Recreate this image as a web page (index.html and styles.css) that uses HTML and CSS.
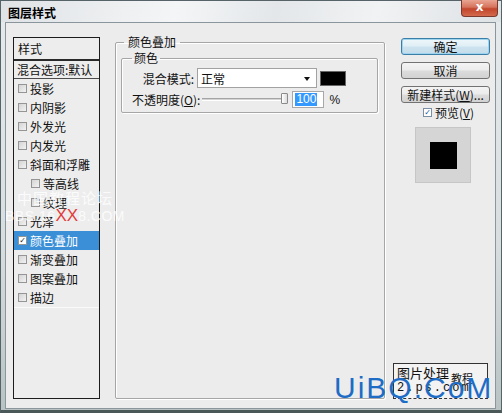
FILE: index.html
```html
<!DOCTYPE html>
<html lang="zh-CN">
<head>
    <meta charset="UTF-8">
    <title>图层样式</title>
    <link rel="stylesheet" href="styles.css">
</head>
<body>
    <div class="window">
        <!-- 标题栏 -->
        <div class="titlebar">
            <span class="title">图层样式</span>
            <span class="close">x</span>
        </div>

        <div class="client">
            <!-- 左侧样式列表 -->
            <div class="list">
                <div class="list-head">样式</div>
                <div class="list-blend">混合选项:默认</div>
                <div class="item"><i class="cb"></i>投影</div>
                <div class="item"><i class="cb"></i>内阴影</div>
                <div class="item"><i class="cb"></i>外发光</div>
                <div class="item"><i class="cb"></i>内发光</div>
                <div class="item"><i class="cb"></i>斜面和浮雕</div>
                <div class="item sub"><i class="cb"></i>等高线</div>
                <div class="item sub"><i class="cb"></i>纹理</div>
                <div class="item"><i class="cb"></i>光泽</div>
                <div class="item active"><i class="cb checked">✓</i>颜色叠加</div>
                <div class="item"><i class="cb"></i>渐变叠加</div>
                <div class="item"><i class="cb"></i>图案叠加</div>
                <div class="item"><i class="cb"></i>描边</div>
                <div class="list-rest"></div>
            </div>

            <!-- 中间设置区 -->
            <fieldset class="group">
                <legend>颜色叠加</legend>
                <fieldset class="group inner">
                    <legend>颜色</legend>
                    <div class="row">
                        <span class="label">混合模式:</span>
                        <div class="select">正常<span class="arrow"></span></div>
                        <span class="swatch"></span>
                    </div>
                    <div class="row row-opacity">
                        <span class="label-op">不透明度(<u>O</u>):</span>
                        <div class="slider"><span class="track"></span><span class="thumb"></span></div>
                        <div class="input"><span class="sel">100</span></div>
                        <span class="pct">%</span>
                    </div>
                </fieldset>
            </fieldset>

            <!-- 右侧按钮 -->
            <div class="side">
                <div class="btn focus">确定</div>
                <div class="btn">取消</div>
                <div class="btn">新建样式(<u>W</u>)...</div>
                <div class="preview-check"><i class="cb checked blue">✓</i>预览(<u>V</u>)</div>
                <div class="preview"><span class="preview-fill"></span></div>
            </div>
        </div>

        <!-- 水印 -->
        <div class="wm-site">
            <div class="wm-line1">中国教程论坛</div>
            <div class="wm-line2">BBS.16<span class="wm-red">XX</span>8.COM</div>
        </div>
        <div class="wm-box">
            <div class="wm-box-top">图片处理<span class="wm-small">教程</span></div>
            <div class="wm-box-bottom">2.ps.com</div>
        </div>
        <div class="wm-uibq">UiBQ.CoM</div>
    </div>
</body>
</html>
```

FILE: styles.css
```css
* {
    margin: 0;
    padding: 0;
    box-sizing: border-box;
}

body {
    width: 502px;
    height: 413px;
    overflow: hidden;
    font-family: "Noto Sans CJK SC", sans-serif;
    font-size: 12px;
    color: #111;
}

/* 窗口外框 */
.window {
    position: relative;
    width: 502px;
    height: 413px;
    display: flex;
    flex-direction: column;
    background: linear-gradient(to bottom, #e6eaec 0%, #d8dedf 60%, #b9c3c4 100%);
    border: 1px solid #56646a;
    border-bottom: 3px solid #4a5858;
}

.titlebar {
    height: 21px;
    display: flex;
    justify-content: space-between;
    align-items: flex-start;
    background: linear-gradient(100deg, #dfe3e6 0%, #f4f5f6 35%, #e3e7ea 55%, #f1f2f3 75%, #dde2e5 100%);
}

.title {
    font-weight: 700;
    font-size: 12px;
    line-height: 12px;
    margin: 6px 0 0 7px;
    color: #000;
}

.close {
    width: 37px;
    height: 17px;
    margin: -1px 3px 0 0;
    border: 1px solid #7c3a2e;
    border-top: none;
    border-radius: 0 0 4px 4px;
    background: linear-gradient(to bottom, #e9a592 0%, #d6735c 45%, #c2452b 55%, #d36a4d 100%);
    color: #fff;
    font-family: "DejaVu Sans", sans-serif;
    font-weight: 700;
    font-size: 12px;
    line-height: 14px;
    text-align: center;
}

.client {
    flex: 1;
    margin: 0 5px 1px 4px;
    background: #ececec;
    border: 1px solid #8a969c;
    display: flex;
    padding: 14px 0 9px 7px;
}

/* 左侧列表 */
.list {
    width: 87px;
    border: 1px solid #1c1c1c;
    display: flex;
    flex-direction: column;
    background: #ededed;
}

.list-head {
    height: 23px;
    padding-left: 4px;
    display: flex;
    align-items: center;
    border-bottom: 2px solid #2a2a2a;
}

.list-blend {
    height: 18px;
    padding-left: 3px;
    display: flex;
    align-items: center;
    border-bottom: 1px solid #4c4c4c;
}

.item {
    height: 19px;
    padding-left: 4px;
    display: flex;
    align-items: center;
}

.item.sub {
    padding-left: 17px;
}

.item.active {
    background: #3a8fd7;
    color: #fff;
}

.list-rest {
    flex: 1;
    border-top: 1px solid #fafafa;
}

.cb {
    width: 9px;
    height: 9px;
    margin-right: 3px;
    border: 1px solid #959595;
    background: linear-gradient(to bottom right, #d4d4d4, #f2f2f2);
    font-style: normal;
    font-size: 8px;
    line-height: 7px;
    text-align: center;
    color: #222;
    overflow: hidden;
}

.cb.checked {
    background: #fff;
    font-family: "DejaVu Sans", sans-serif;
    font-weight: 700;
}

.cb.blue {
    color: #2456a8;
    border-color: #7a8ea8;
}

/* 分组框 */
.group {
    width: 270px;
    margin: -1px 0 0 15px;
    padding: 4px 6px 4px 5px;
    border: 1px solid #a6a6a6;
    border-radius: 2px;
    box-shadow: 1px 1px 0 #fff, inset 1px 1px 0 #fff;
}

.group legend {
    margin-left: 3px;
    padding: 0 4px;
    line-height: 12px;
    font-size: 12px;
}

.group.inner {
    width: 257px;
    margin: 0;
    padding: 0 4px 4px 10px;
}

.group.inner legend {
    margin-left: 0;
    padding: 0 2px;
}

.row {
    display: flex;
    align-items: center;
    height: 20px;
    margin-top: 4px;
    white-space: nowrap;
}

.label {
    width: 63px;
    text-align: right;
    padding-right: 1px;
}

.select {
    position: relative;
    width: 120px;
    height: 20px;
    margin-left: 2px;
    padding-left: 3px;
    background: #fff;
    border: 1px solid #a2a2a2;
    display: flex;
    align-items: center;
}

.arrow {
    position: absolute;
    right: 6px;
    top: 8px;
    border-left: 3px solid transparent;
    border-right: 3px solid transparent;
    border-top: 4px solid #111;
}

.swatch {
    width: 26px;
    height: 15px;
    margin-left: 3px;
    background: #000;
    border: 1px solid #666;
}

.row-opacity {
    height: 17px;
    margin-top: 3px;
}

.label-op {
    flex-shrink: 0;
    margin-right: 2px;
}

.slider {
    position: relative;
    width: 86px;
    height: 17px;
    margin-right: 4px;
    flex-shrink: 0;
}

.track {
    position: absolute;
    left: 0;
    right: 4px;
    top: 7px;
    height: 3px;
    background: #d2d2d2;
    border-top: 1px solid #a4a4a4;
    border-bottom: 1px solid #fff;
}

.thumb {
    position: absolute;
    right: 0;
    top: 2px;
    width: 7px;
    height: 11px;
    background: linear-gradient(to right, #fff, #dcdcdc);
    border: 1px solid #8a8a8a;
    border-radius: 1px;
}

.input {
    width: 32px;
    height: 17px;
    padding-left: 2px;
    background: #fff;
    border: 1px solid #a8a8a8;
    display: flex;
    align-items: center;
    font-family: "Liberation Sans", sans-serif;
    flex-shrink: 0;
}

.sel {
    background: #3399ff;
    color: #fff;
    line-height: 13px;
    padding: 0 1px;
}

.pct {
    margin-left: 5px;
    font-family: "Liberation Sans", sans-serif;
}

/* 右侧按钮 */
.side {
    width: 89px;
    margin: 1px 0 0 16px;
    display: flex;
    flex-direction: column;
}

.btn {
    height: 17px;
    margin-bottom: 7px;
    border: 1px solid #727272;
    border-radius: 3px;
    background: linear-gradient(to bottom, #f4f4f4 0%, #ebebeb 48%, #dcdcdc 52%, #d2d2d2 100%);
    display: flex;
    align-items: center;
    justify-content: center;
    line-height: 12px;
}

.btn.focus {
    border-color: #3a7fa8;
    box-shadow: inset 0 0 0 1px #9fd4ee;
    background: linear-gradient(to bottom, #eef7fb 0%, #e0eef5 48%, #cde3ef 52%, #c4dcea 100%);
}

.preview-check {
    height: 14px;
    margin-top: -5px;
    padding-left: 22px;
    display: flex;
    align-items: center;
}

.preview {
    width: 56px;
    height: 56px;
    margin: 8px 0 0 14px;
    background: #d5d5d5;
    border: 1px solid #c6c6c6;
    display: flex;
    align-items: center;
    justify-content: center;
}

.preview-fill {
    width: 27px;
    height: 27px;
    background: #000;
}

/* 水印 */
.wm-site {
    position: absolute;
    left: 4px;
    top: 188px;
    color: rgba(255, 255, 255, 0.8);
    font-family: "Liberation Sans", sans-serif;
}

.wm-line1 {
    margin-left: 12px;
    font-family: "Noto Sans CJK SC", sans-serif;
    font-size: 15px;
    line-height: 18px;
    letter-spacing: 1px;
}

.wm-line2 {
    font-size: 14px;
    line-height: 18px;
    letter-spacing: 0.5px;
}

.wm-red {
    color: #e23b3b;
    font-size: 17px;
    letter-spacing: 0;
}

.wm-box {
    position: absolute;
    left: 392px;
    top: 362px;
    width: 95px;
    height: 36px;
    background: #f3f3f3;
    border: 1px solid #333;
    border-bottom: 1px dashed #333;
    padding: 1px 3px;
}

.wm-box-top {
    font-size: 13px;
    line-height: 15px;
}

.wm-small {
    font-size: 11px;
    margin-left: 2px;
    position: relative;
    top: 5px;
}

.wm-box-bottom {
    font-family: "Liberation Mono", monospace;
    font-size: 12px;
    line-height: 14px;
    letter-spacing: 2px;
}

.wm-uibq {
    position: absolute;
    left: 333px;
    top: 372px;
    font-family: "Liberation Sans", sans-serif;
    font-size: 30px;
    line-height: 30px;
    letter-spacing: 2px;
    color: #1d6cc6;
}
```
